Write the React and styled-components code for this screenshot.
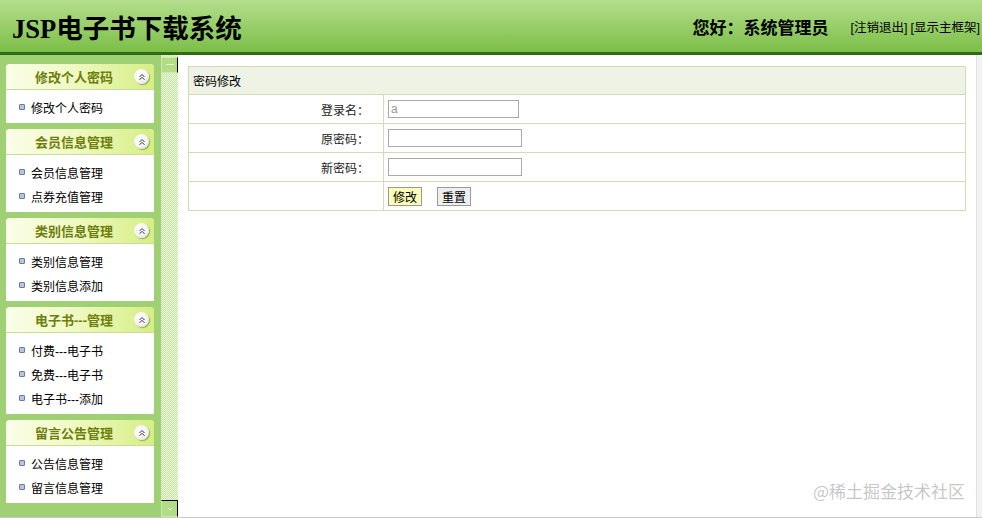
import React from "react";
import styled, { createGlobalStyle } from "styled-components";

const GlobalStyle = createGlobalStyle`
    html, body {
        margin: 0;
        padding: 0;
        height: 100%;
        overflow: hidden;
    }
    body {
        font-family: "Liberation Sans", "Noto Sans CJK SC", sans-serif;
        font-size: 12px;
        color: #000;
        background: #fff;
    }
`

const Page = styled.div`
    display: flex;
    flex-direction: column;
    height: 100vh;
    position: relative;
`

const Header = styled.div`
    height: 52px;
    flex: none;
    display: flex;
    align-items: center;
    justify-content: space-between;
    background: linear-gradient(to bottom, #b4de8c 0%, #9bd06d 45%, #7cbe48 100%);
    border-bottom: 3px solid #2f6a14;
`

const Title = styled.h1`
    margin: 0 0 0 12px;
    font-family: "Liberation Serif", "Noto Sans CJK SC", serif;
    font-size: 26.5px;
    font-weight: bold;
    color: #000;
`

const UserBox = styled.div`
    display: flex;
    align-items: center;
    margin-right: 2px;
`

const Hello = styled.span`
    font-size: 17px;
    font-weight: bold;
    margin-right: 19px;
`

const TopLink = styled.a`
    font-size: 12.5px;
    color: #000;
    text-decoration: none;
    margin-left: 3px;
`

const Body = styled.div`
    flex: 1;
    display: flex;
    min-height: 0;
    border-bottom: 1px solid #c8c8c8;
`

const Sidebar = styled.div`
    width: 161px;
    flex: none;
    background: #9fd074;
    padding: 9px 0 0 6px;
    box-sizing: border-box;
    display: flex;
    flex-direction: column;
    gap: 6px;
`

const Panel = styled.div`
    width: 148px;
    background: #fff;
    border-radius: 4px 4px 0 0;
`

const PanelHead = styled.div`
    height: 25px;
    display: flex;
    align-items: center;
    justify-content: center;
    position: relative;
    background: linear-gradient(to right, #fbfdea 0%, #f0f9c4 45%, #d6ee84 100%);
    border-bottom: 1px solid #c6df94;
    border-radius: 4px 4px 0 0;
    padding-right: 12px;
    font-size: 13px;
    font-weight: bold;
    color: #6e7e0c;
`

const Toggle = styled.span`
    position: absolute;
    right: 5px;
    top: 5px;
    width: 15px;
    height: 15px;
    border-radius: 50%;
    background: radial-gradient(circle at 40% 35%, #ffffff 0%, #f4f4f4 55%, #d0d0d0 100%);
    box-shadow: 1px 1px 1px rgba(90, 110, 40, 0.55);
    display: flex;
    align-items: center;
    justify-content: center;
`

const PanelBody = styled.ul`
    list-style: none;
    margin: 0;
    padding: 5px 0 4px 0;
`

const Item = styled.li`
    height: 24px;
    display: flex;
    align-items: center;
    padding-left: 13px;
    font-size: 12px;
    color: #000;
`

const Bullet = styled.span`
    width: 4px;
    height: 4px;
    border: 1px solid #6c7a9c;
    border-radius: 1px;
    background: #b8c4e0;
    margin-right: 6px;
    flex: none;
`

const Splitter = styled.div`
    width: 17px;
    flex: none;
    display: flex;
    flex-direction: column;
    justify-content: space-between;
    background-color: #eef8e0;
    background-image: conic-gradient(#c4e6a0 25%, transparent 0 50%, #c4e6a0 0 75%, transparent 0);
    background-size: 2px 2px;
`

const SplitButton = styled.div`
    height: ${p => (p.bottom ? "17px" : "16px")};
    background: #b3dc86;
    border: 1px solid #cdeaa8;
    border-right: 1px solid #000;
    border-top: ${p => (p.bottom ? "1px solid #000" : "1px solid #cdeaa8")};
    box-sizing: border-box;
    display: flex;
    align-items: center;
    justify-content: center;
    margin-top: ${p => (p.bottom ? "0" : "2px")};
`

const Main = styled.div`
    flex: 1;
    background: #fff;
    padding: 11px 10px 0 10px;
    min-width: 0;
`

const ScrollEdge = styled.div`
    width: 5px;
    flex: none;
    background: #f2f2f2;
    border-left: 1px solid #e0e0e0;
`

const Table = styled.table`
    width: 100%;
    border-collapse: collapse;
    border: 1px solid #d2dbb8;
    font-size: 12px;
`

const HeadCell = styled.td`
    height: 27px;
    background: #eef3e6;
    padding: 0 4px;
    border: 1px solid #d2dbb8;
    color: #000;
`

const Label = styled.td`
    width: 180px;
    height: 28px;
    padding: 0 14px 0 0;
    text-align: right;
    border: 1px solid #d2dbb8;
    color: #222;
`

const Field = styled.td`
    height: 28px;
    padding: 0 4px;
    border: 1px solid #d2dbb8;
`

const Input = styled.input`
    width: ${p => p.w}px;
    height: 18px;
    box-sizing: border-box;
    border: 1px solid #a9a9a9;
    padding: 0 2px;
    font-size: 12px;
    font-family: "Liberation Sans", sans-serif;
    color: #999;
    vertical-align: middle;
    outline: none;
`

const Button = styled.button`
    height: 19px;
    padding: 0 4px;
    font-size: 12px;
    font-family: "Liberation Sans", "Noto Sans CJK SC", sans-serif;
    border: 1px solid #999;
    background: ${p => (p.primary ? "#fbfdb8" : "#efefef")};
    margin-right: 15px;
    vertical-align: middle;
    color: #000;
`

const Watermark = styled.div`
    position: absolute;
    right: 17px;
    bottom: 15px;
    font-size: 17px;
    color: rgba(150, 150, 150, 0.55);
    font-family: "Noto Sans CJK SC", sans-serif;
`

const menus = [
    { title: "修改个人密码", items: ["修改个人密码"] },
    { title: "会员信息管理", items: ["会员信息管理", "点券充值管理"] },
    { title: "类别信息管理", items: ["类别信息管理", "类别信息添加"] },
    { title: "电子书---管理", items: ["付费---电子书", "免费---电子书", "电子书---添加"] },
    { title: "留言公告管理", items: ["公告信息管理", "留言信息管理"] },
]

const UpIcon = () => (
    <svg width="8" height="8" viewBox="0 0 8 8">
        <path d="M1.5 4 L4 1.5 L6.5 4 M1.5 6.8 L4 4.3 L6.5 6.8" fill="none" stroke="#333" strokeWidth="1" />
    </svg>
)

const App = () => {
    return (
        <Page>
            <GlobalStyle />
            <Header>
                <Title>JSP电子书下载系统</Title>
                <UserBox>
                    <Hello>您好：系统管理员</Hello>
                    <TopLink href="#">[注销退出]</TopLink>
                    <TopLink href="#">[显示主框架]</TopLink>
                </UserBox>
            </Header>
            <Body>
                <Sidebar>
                    {menus.map(m => (
                        <Panel key={m.title}>
                            <PanelHead>
                                {m.title}
                                <Toggle><UpIcon /></Toggle>
                            </PanelHead>
                            <PanelBody>
                                {m.items.map(it => (
                                    <Item key={it}><Bullet />{it}</Item>
                                ))}
                            </PanelBody>
                        </Panel>
                    ))}
                </Sidebar>
                <Splitter>
                    <SplitButton>
                        <svg width="8" height="2" viewBox="0 0 8 2"><rect width="8" height="1" fill="#e8f6d8" /></svg>
                    </SplitButton>
                    <SplitButton bottom>
                        <svg width="6" height="4" viewBox="0 0 6 4"><path d="M1 1 L3 3 L5 1" fill="none" stroke="#e8f6d8" /></svg>
                    </SplitButton>
                </Splitter>
                <Main>
                    <Table>
                        <tbody>
                            <tr><HeadCell colSpan={2}>密码修改</HeadCell></tr>
                            <tr>
                                <Label>登录名：</Label>
                                <Field><Input w={131} defaultValue="a" readOnly /></Field>
                            </tr>
                            <tr>
                                <Label>原密码：</Label>
                                <Field><Input w={134} type="password" /></Field>
                            </tr>
                            <tr>
                                <Label>新密码：</Label>
                                <Field><Input w={134} type="password" /></Field>
                            </tr>
                            <tr>
                                <Label></Label>
                                <Field>
                                    <Button primary>修改</Button>
                                    <Button>重置</Button>
                                </Field>
                            </tr>
                        </tbody>
                    </Table>
                </Main>
                <ScrollEdge />
            </Body>
            <Watermark>@稀土掘金技术社区</Watermark>
        </Page>
    )
}

export default App;
